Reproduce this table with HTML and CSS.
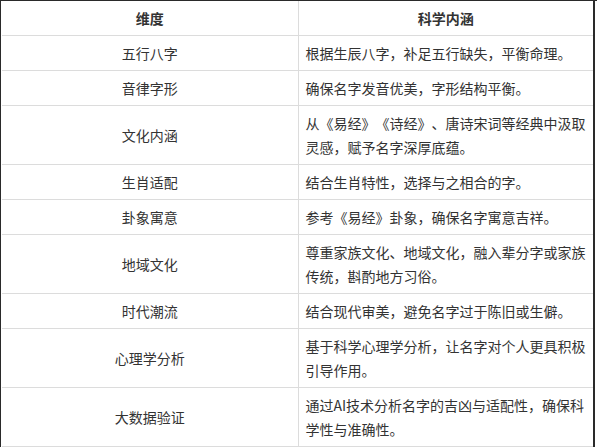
FILE: index.html
```html
<!DOCTYPE html>
<html lang="zh">
<head>
<meta charset="utf-8">
<link rel="stylesheet" href="styles.css">
</head>
<body>
<div class="frame">
<table class="table">
  <colgroup><col class="c1"><col class="c2"></colgroup>
  <thead>
    <tr><th>维度</th><th>科学内涵</th></tr>
  </thead>
  <tbody>
    <tr><td class="dim">五行八字</td><td>根据生辰八字，补足五行缺失，平衡命理。</td></tr>
    <tr><td class="dim">音律字形</td><td>确保名字发音优美，字形结构平衡。</td></tr>
    <tr><td class="dim">文化内涵</td><td>从《易经》《诗经》、唐诗宋词等经典中汲取灵感，赋予名字深厚底蕴。</td></tr>
    <tr><td class="dim">生肖适配</td><td>结合生肖特性，选择与之相合的字。</td></tr>
    <tr><td class="dim">卦象寓意</td><td>参考《易经》卦象，确保名字寓意吉祥。</td></tr>
    <tr><td class="dim">地域文化</td><td>尊重家族文化、地域文化，融入辈分字或家族传统，斟酌地方习俗。</td></tr>
    <tr><td class="dim">时代潮流</td><td>结合现代审美，避免名字过于陈旧或生僻。</td></tr>
    <tr><td class="dim">心理学分析</td><td>基于科学心理学分析，让名字对个人更具积极引导作用。</td></tr>
    <tr><td class="dim">大数据验证</td><td>通过AI技术分析名字的吉凶与适配性，确保科学性与准确性。</td></tr>
  </tbody>
</table>
</div>
</body>
</html>
```
FILE: styles.css
```css
html, body {
  margin: 0;
  padding: 0;
  background: #fff;
}
body {
  font-family: "Noto Sans CJK SC", "Noto Sans", sans-serif;
  color: #333;
  font-size: 14px;
  text-spacing-trim: space-all;
  font-feature-settings: "halt" 0, "chws" 0;
}
.frame {
  width: 597px;
  height: 447px;
  box-sizing: border-box;
  border-top: 1px solid #2a2a2a;
  border-left: 1px solid #2a2a2a;
  overflow: hidden;
  padding-left: 1px;
}
.table {
  width: 593px;
  border-collapse: collapse;
  table-layout: fixed;
  border-right: 2px solid #2a2a2a;
}
.c1 { width: 296px; }
.table th,
.table td {
  border: 1px solid #dcdcdc;
  padding: 5px 7px;
  line-height: 24px;
  text-align: left;
  vertical-align: middle;
  font-weight: normal;
}
.table th {
  font-weight: bold;
  text-align: center;
  background: #fff;
}
.table td.dim {
  text-align: center;
}
.table tr > :first-child { border-left: 0; }
.table thead th { border-top: 0; }
```
